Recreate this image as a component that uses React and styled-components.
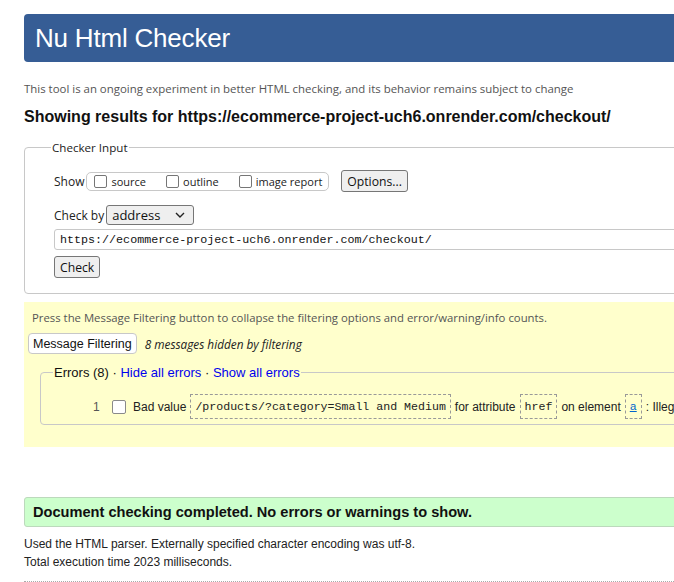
import React from 'react'
import styled, { createGlobalStyle } from 'styled-components'

const GlobalStyle = createGlobalStyle`
	html, body {
		margin: 0;
		padding: 0;
		overflow: hidden;
		background: #ffffff;
	}
	body {
		font-family: 'Liberation Sans', Arial, sans-serif;
		color: #111111;
	}
`

const ui = `'Open Sans', 'Noto Sans', sans-serif`
const mono = `'Liberation Mono', 'DejaVu Sans Mono', monospace`

export default function App() {
	return (
		<Page>
			<GlobalStyle />
			<Header>Nu Html Checker</Header>
			<Tagline>This tool is an ongoing experiment in better HTML checking, and its behavior remains subject to change</Tagline>
			<Results>Showing results for https://ecommerce-project-uch6.onrender.com/checkout/</Results>

			<InputFieldset>
				<Legend>Checker Input</Legend>
				<Row>
					<Label>Show</Label>
					<ShowGroup>
						<CheckLabel><Box />source</CheckLabel>
						<CheckLabel><Box />outline</CheckLabel>
						<CheckLabel><Box />image report</CheckLabel>
					</ShowGroup>
					<GrayButton>Options...</GrayButton>
				</Row>
				<Row $top={13}>
					<Label>Check by</Label>
					<Select>
						address
						<svg width='10' height='6' viewBox='0 0 10 6'>
							<path d='M1 1 L5 5 L9 1' fill='none' stroke='#222' strokeWidth='1.4' />
						</svg>
					</Select>
				</Row>
				<UrlInput>https://ecommerce-project-uch6.onrender.com/checkout/</UrlInput>
				<GrayButton $top={6}>Check</GrayButton>
			</InputFieldset>

			<FilterPanel>
				<FilterNote>Press the Message Filtering button to collapse the filtering options and error/warning/info counts.</FilterNote>
				<FilterRow>
					<WhiteButton>Message Filtering</WhiteButton>
					<Hidden>8 messages hidden by filtering</Hidden>
				</FilterRow>
				<ErrorFieldset>
					<ErrorLegend>
						Errors (8) · <BlueLink>Hide all errors</BlueLink> · <BlueLink>Show all errors</BlueLink>
					</ErrorLegend>
					<ErrorRow>
						<Num>1</Num>
						<ErrBox />
						<span>Bad value</span>
						<Code>/products/?category=Small and Medium</Code>
						<span>for attribute</span>
						<Code>href</Code>
						<span>on element</span>
						<Code><CodeLink>a</CodeLink></Code>
						<span>: Illegal character in query: space is not allowed.</span>
					</ErrorRow>
				</ErrorFieldset>
			</FilterPanel>

			<Success>Document checking completed. No errors or warnings to show.</Success>
			<Details $top={9}>Used the HTML parser. Externally specified character encoding was utf-8.</Details>
			<Details>Total execution time 2023 milliseconds.</Details>
			<Rule />
		</Page>
	)
}

const Page = styled.div`
	width: 900px;
	padding: 14px 0 0 24px;
`

const Header = styled.h1`
	margin: 0;
	height: 48px;
	line-height: 48px;
	padding-left: 11px;
	background: #365d95;
	border-radius: 4px;
	color: #ffffff;
	font-weight: normal;
	font-size: 26px;
	letter-spacing: -0.2px;
`

const Tagline = styled.p`
	margin: 19px 0 0;
	font-family: ${ui};
	font-size: 11.43px;
	line-height: 16px;
	color: #555555;
`

const Results = styled.h2`
	margin: 10px 0 0;
	font-size: 16px;
	line-height: 20px;
	font-weight: bold;
	color: #111111;
`

const InputFieldset = styled.fieldset`
	margin: 13px 0 0;
	padding: 15px 29px 15px;
	border: 1px solid #c8c8c8;
	border-radius: 4px;
	display: flex;
	flex-direction: column;
	align-items: flex-start;
	font-family: ${ui};
	font-size: 12px;
`

const Legend = styled.legend`
	margin-left: -3px;
	padding: 0 1px;
	font-size: 11.6px;
	color: #222222;
`

const Row = styled.div`
	display: flex;
	align-items: center;
	margin-top: ${(p) => p.$top || 0}px;
`

const Label = styled.span`
	color: #222222;
	margin-right: 2px;
`

const ShowGroup = styled.div`
	display: flex;
	align-items: center;
	height: 17px;
	padding: 0 6px 0 7px;
	border: 1px solid #c8c8c8;
	border-radius: 5px;
	margin-right: 12px;
`

const CheckLabel = styled.span`
	display: flex;
	align-items: center;
	font-size: 11px;
	color: #222222;
	margin-right: 20px;
	&:last-child {
		margin-right: 0;
	}
`

const Box = styled.span`
	box-sizing: border-box;
	width: 13px;
	height: 13px;
	border: 1px solid #767676;
	border-radius: 2px;
	background: #ffffff;
	margin-right: 4px;
`

const GrayButton = styled.span`
	box-sizing: border-box;
	display: inline-flex;
	align-items: center;
	height: 22px;
	padding: 0 5px;
	margin-top: ${(p) => p.$top || 0}px;
	background: #efefef;
	border: 1px solid #767676;
	border-radius: 3px;
	font-size: 12.2px;
	color: #111111;
`

const Select = styled.span`
	display: inline-flex;
	align-items: center;
	justify-content: space-between;
	box-sizing: border-box;
	width: 88px;
	height: 20px;
	padding: 0 8px 0 5px;
	background: #efefef;
	border: 1px solid #767676;
	border-radius: 3px;
	font-size: 13px;
	color: #111111;
`

const UrlInput = styled.div`
	box-sizing: border-box;
	width: 100%;
	height: 21px;
	margin-top: 4px;
	padding-left: 5px;
	display: flex;
	align-items: center;
	border: 1px solid #c8c8c8;
	border-radius: 3px;
	font-family: ${mono};
	font-size: 11.7px;
	color: #111111;
`

const FilterPanel = styled.div`
	margin-top: 8px;
	padding: 8px 0 22px 4px;
	background: #ffffcc;
`

const FilterNote = styled.p`
	margin: 0 0 0 4px;
	font-family: ${ui};
	font-size: 11.35px;
	line-height: 16px;
	color: #555555;
`

const FilterRow = styled.div`
	display: flex;
	align-items: center;
	margin-top: 7px;
`

const WhiteButton = styled.span`
	display: inline-flex;
	align-items: center;
	height: 19px;
	padding: 0 4px;
	background: #ffffff;
	border: 1px solid #c8c8c8;
	border-radius: 4px;
	font-size: 12.5px;
	color: #111111;
`

const Hidden = styled.em`
	margin-left: 8px;
	font-family: ${ui};
	font-size: 11.8px;
	color: #222222;
`

const ErrorFieldset = styled.fieldset`
	margin: 11px 0 0 12px;
	padding: 14px 0 5px 12px;
	border: 1px solid #c8c8c8;
	border-radius: 4px;
`

const ErrorLegend = styled.legend`
	margin-left: 0;
	padding: 0 1px;
	font-size: 13px;
	color: #111111;
`

const BlueLink = styled.span`
	color: #0000ee;
`

const ErrorRow = styled.div`
	display: flex;
	align-items: center;
	gap: 4px;
	padding-left: 40px;
	font-size: 12px;
	color: #222222;
	white-space: nowrap;
`

const Num = styled.span`
	width: 15px;
	color: #555555;
`

const ErrBox = styled.span`
	width: 12px;
	height: 12px;
	border: 1px solid #8a8a8a;
	border-radius: 2px;
	background: #ffffff;
	margin-right: 3px;
`

const Code = styled.code`
	display: inline-flex;
	align-items: center;
	height: 23px;
	padding: 0 4px;
	border: 1px dashed #999999;
	font-family: ${mono};
	font-size: 11.6px;
	color: #222222;
`

const CodeLink = styled.span`
	color: #0066cc;
	text-decoration: underline;
`

const Success = styled.div`
	margin-top: 50px;
	height: 28px;
	line-height: 28px;
	padding-left: 8px;
	background: #ccffcc;
	border: 1px solid #bcd9bc;
	border-radius: 3px;
	font-size: 14.6px;
	font-weight: bold;
	color: #111111;
`

const Details = styled.p`
	margin: ${(p) => p.$top || 2}px 0 0;
	font-size: 12px;
	line-height: 16px;
	color: #222222;
`

const Rule = styled.hr`
	margin: 11px 0 0;
	border: 0;
	border-top: 1px dotted #aaaaaa;
`
